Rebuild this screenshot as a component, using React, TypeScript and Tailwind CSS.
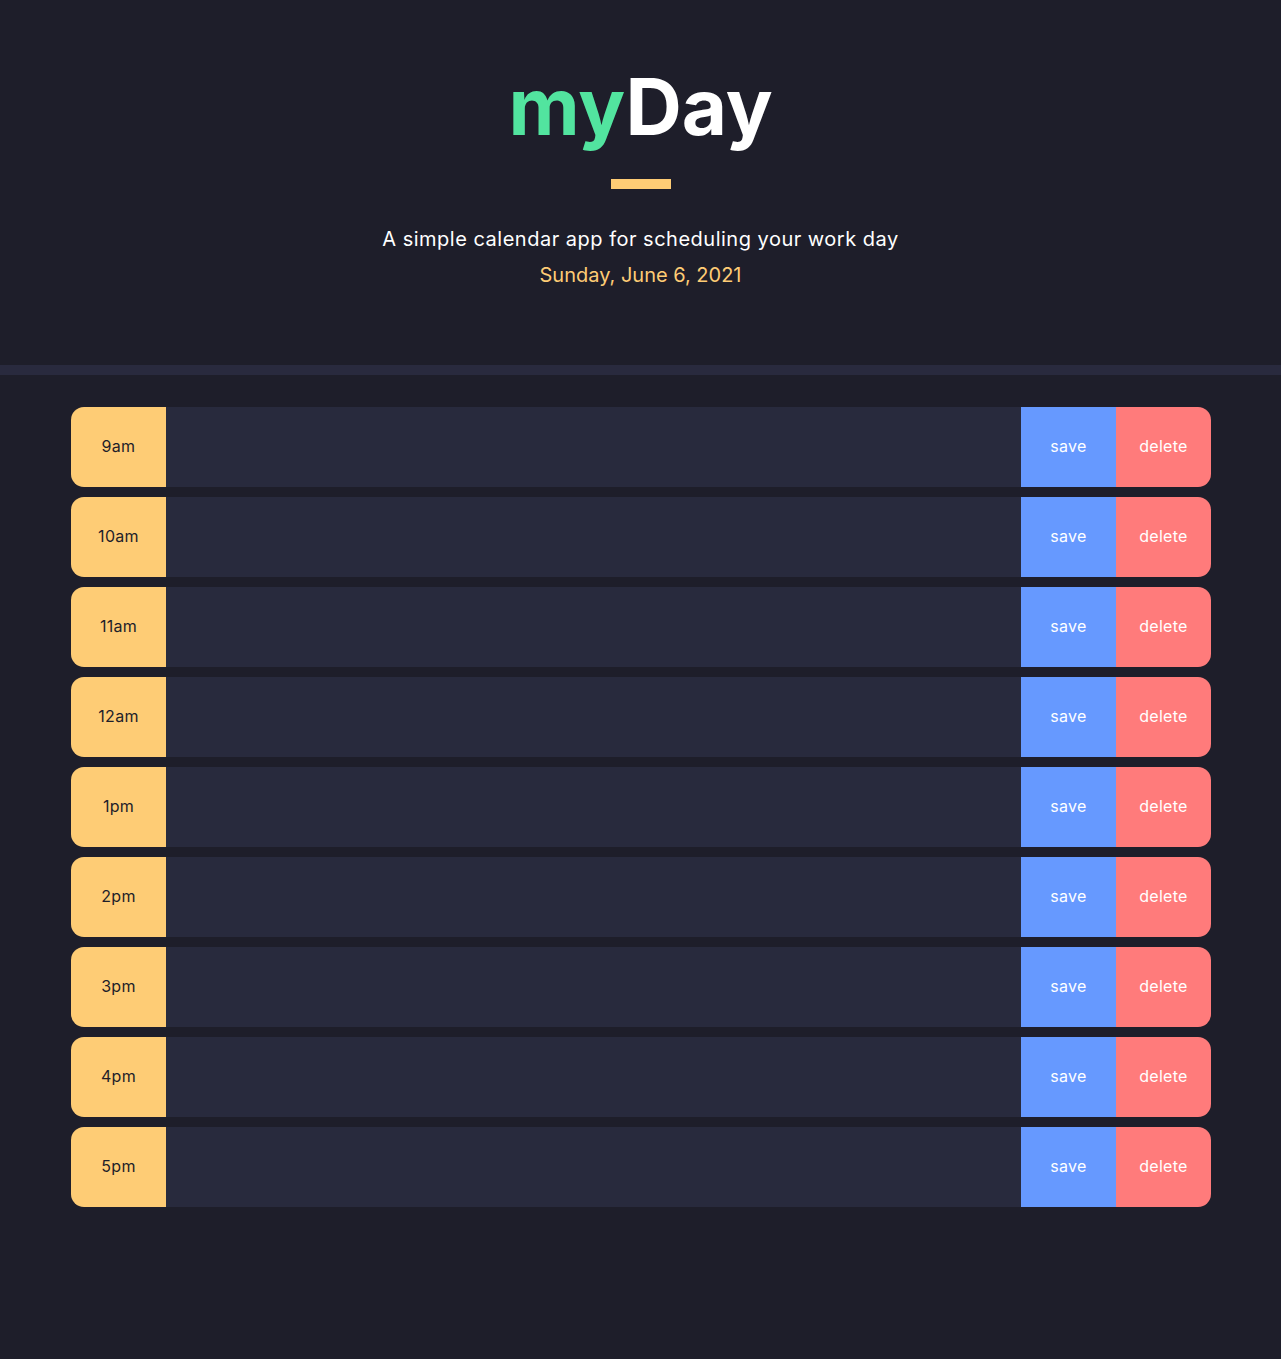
const hours = ["9am", "10am", "11am", "12am", "1pm", "2pm", "3pm", "4pm", "5pm"];

function HourRow({ label }: { label: string }) {
  return (
    <div className="flex h-20 w-full">
      <div className="flex w-[95px] shrink-0 items-center justify-center rounded-l-[13px] bg-[#fecc75] pb-[2px] text-base tracking-[0.3px] text-[#1e1e2a]">
        {label}
      </div>
      <textarea className="h-full flex-1 resize-none bg-[#282a3d] p-3 text-white outline-none" />
      <button className="w-[95px] shrink-0 bg-[#6699ff] pb-[2px] text-base tracking-[0.3px] text-white">save</button>
      <button className="w-[95px] shrink-0 rounded-r-[13px] bg-[#ff7b7b] pb-[2px] text-base tracking-[0.3px] text-white">delete</button>
    </div>
  );
}

export default function App() {
  return (
    <div className="min-h-[1359px] w-full bg-[#1e1e2a] font-['Inter',sans-serif]">
      <header className="flex h-[365px] flex-col items-center pt-[62px]">
        <h1 className="text-[78px] font-bold leading-[90px]">
          <span className="text-[#52e49f]">my</span>
          <span className="text-white">Day</span>
        </h1>
        <div className="mt-[27px] h-[10px] w-[60px] bg-[#fecc75]" />
        <p className="mt-[38px] text-[20px] leading-[24px] tracking-[0.5px] text-white">A simple calendar app for scheduling your work day</p>
        <p className="mt-[12px] text-[20px] leading-[24px] text-[#fecc75]">Sunday, June 6, 2021</p>
      </header>
      <div className="h-[10px] w-full bg-[#292a3e]" />
      <main className="flex flex-col gap-[10px] pl-[71px] pr-[70px] pt-[32px] pb-[150px]">
        {hours.map((h) => (
          <HourRow key={h} label={h} />
        ))}
      </main>
    </div>
  );
}
